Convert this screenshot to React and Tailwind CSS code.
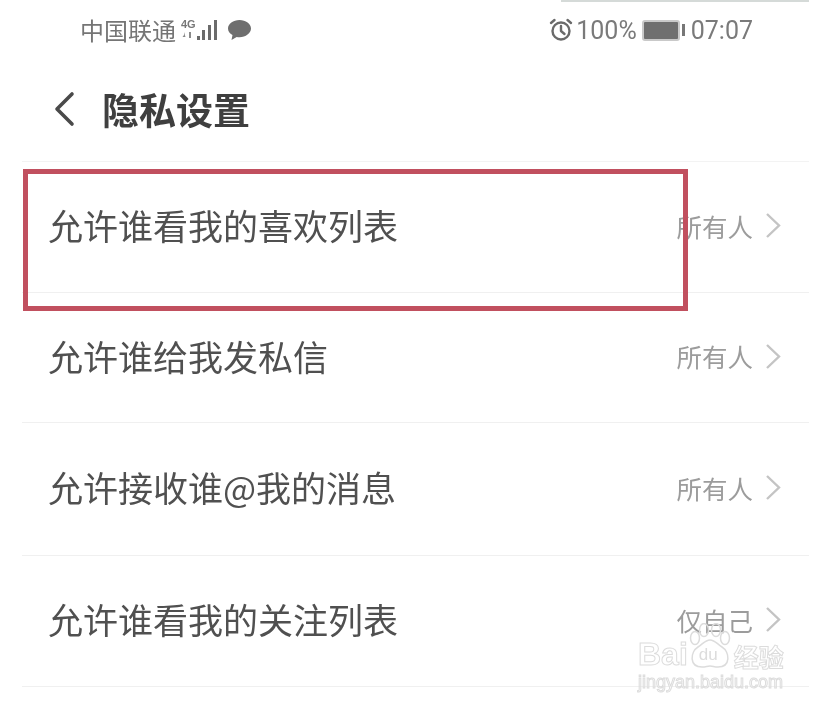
const rows = [
  { label: '允许谁看我的喜欢列表', value: '所有人', height: 'h-[131px]' },
  { label: '允许谁给我发私信', value: '所有人', height: 'h-[130px]' },
  { label: '允许接收谁@我的消息', value: '所有人', height: 'h-[133px]' },
  { label: '允许谁看我的关注列表', value: '仅自己', height: 'h-[131px]' },
];

const cjk = { fontFamily: '"Noto Sans CJK SC", "Liberation Sans", sans-serif' };
const latin = { fontFamily: '"Liberation Sans", sans-serif' };

const SignalIcon = () => (
  <svg width="38" height="24" viewBox="0 0 38 24" fill="#6b6b6b">
    <text x="0" y="10" fontSize="11" fontWeight="700" fontFamily="Liberation Sans" fill="#777">4G</text>
    <path d="M3 14v3l-1.500 2h3zM8 14h2v6H8z" fill="#8a8a8a" />
    <rect x="16" y="18" width="3" height="4" />
    <rect x="21" y="12" width="3" height="10" />
    <rect x="27" y="7" width="3" height="15" />
    <rect x="33" y="2" width="3" height="20" />
  </svg>
);

const ChatIcon = () => (
  <svg width="25" height="22" viewBox="0 0 25 22" fill="#6e6e6e">
    <path d="M12.500 1C18.800 1 24 4.800 24 9.600c0 4.800-5.200 8.600-11.500 8.600-1 0-1.900-.1-2.800-.3L4.500 21l1-4.900C2.700 14.600 1 12.200 1 9.600 1 4.800 6.200 1 12.500 1z" />
  </svg>
);

const AlarmIcon = () => (
  <svg width="24" height="24" viewBox="0 0 24 24" fill="none" stroke="#6a6a6a" strokeWidth="2.400" strokeLinecap="round" strokeLinejoin="round">
    <circle cx="12" cy="13" r="8.500" />
    <path d="M12 8v5l3.500 3" />
    <path d="M2 5l3.500-3M22 5l-3.500-3" />
  </svg>
);

const BatteryIcon = () => (
  <div className="flex items-center gap-[2px]">
    <div className="w-[38px] h-[21px] rounded-[3px] border-2 border-[#c9c9c9] bg-[#6f6f6f]" />
    <div className="w-[3px] h-[12px] bg-[#777777]" />
  </div>
);

const BackChevron = () => (
  <svg width="24" height="36" viewBox="0 0 24 36" fill="none" stroke="#4a4a4a" strokeWidth="3.600" strokeLinecap="round" strokeLinejoin="round">
    <path d="M20 3 5 18l15 15" />
  </svg>
);

const RowChevron = () => (
  <svg width="17" height="27" viewBox="0 0 17 27" fill="none" stroke="#c4c4c4" strokeWidth="2.400">
    <path d="M2 2l12 11.500L2 25" />
  </svg>
);

const outline = 'text-transparent [-webkit-text-stroke:1px_#dcdcdc]';

// Baidu paw around "du"
const Paw = () => (
  <svg width="44" height="46" viewBox="0 0 44 46" fill="none" stroke="#dcdcdc" strokeWidth="1.500">
    <ellipse cx="7" cy="15" rx="4.500" ry="6.500" />
    <ellipse cx="16" cy="7" rx="4.500" ry="6.500" />
    <ellipse cx="28" cy="7" rx="4.500" ry="6.500" />
    <ellipse cx="37" cy="15" rx="4.500" ry="6.500" />
    <path d="M22 17c5 0 7 4 12 7 8 5 9 20-4 20-4 0-5-1-8-1s-4 1-8 1C1 44 2 29 10 24c5-3 7-7 12-7z" />
  </svg>
);

const Watermark = () => (
  <div className="absolute left-[638px] top-[623px] w-[150px] h-[70px] whitespace-nowrap">
    <div className="flex items-end h-[46px]">
      <span className={`text-[32px] leading-none font-bold shrink-0 -mb-[1px] ${outline}`} style={latin}>Bai</span>
      <div className="relative shrink-0 w-[44px] h-[46px]">
        <Paw />
        <span className="absolute left-[11px] top-[23px] text-[17px] leading-none text-[#dcdcdc]" style={latin}>du</span>
      </div>
      <span className={`ml-[2px] text-[25px] leading-none font-bold shrink-0 ${outline}`} style={cjk}>经验</span>
    </div>
    <div className={`text-[18px] leading-none mt-[4px] ${outline}`} style={latin}>jingyan.baidu.com</div>
  </div>
);

export default function App() {
  return (
    <div className="relative w-[831px] h-[712px] overflow-hidden bg-white blur-[0.5px]" style={cjk}>
      <div className="absolute right-[22px] top-0 w-[248px] h-[2px] bg-[#d5dad8]" />

      {/* status bar */}
      <div className="flex items-center justify-between h-[60px] pl-[80px] pr-[78px]">
        <div className="flex items-center gap-[5px] -mt-[1px]">
          <span className="text-[24px] leading-none text-[#757575]">中国联通</span>
          <SignalIcon />
          <div className="ml-[3px]"><ChatIcon /></div>
        </div>
        <div className="flex items-center text-[25px] leading-none text-[#7a7a7a]" style={{ fontFamily: '"Roboto", sans-serif' }}>
          <AlarmIcon />
          <span className="ml-[3px] mr-[5px]">100%</span>
          <BatteryIcon />
          <span className="ml-[6px]">07:07</span>
        </div>
      </div>

      {/* header */}
      <div className="flex items-center h-[101px] pl-[52px] pb-[3px]">
        <BackChevron />
        <h1 className="ml-[26px] text-[37px] leading-none font-bold text-[#3f3f3f]">隐私设置</h1>
      </div>

      {/* rows */}
      <div className="mx-[22px] border-t border-[#f3f3f3]">
        {rows.map((row) => (
          <div key={row.label} className={`flex items-center justify-between border-b border-[#f0f0f0] pl-[26px] pr-[27px] ${row.height}`}>
            <span className="text-[35px] leading-none text-[#505050] -mt-[5px]">{row.label}</span>
            <span className="flex items-center gap-[12px] text-[25.500px] leading-none text-[#9c9c9c] -mt-[3px]">
              {row.value}
              <RowChevron />
            </span>
          </div>
        ))}
      </div>

      {/* red highlight drawn over the first row */}
      <div className="absolute left-[23px] top-[169px] w-[665px] h-[142px] border-[5px] border-[#c1505f]" />
      <Watermark />
    </div>
  );
}
